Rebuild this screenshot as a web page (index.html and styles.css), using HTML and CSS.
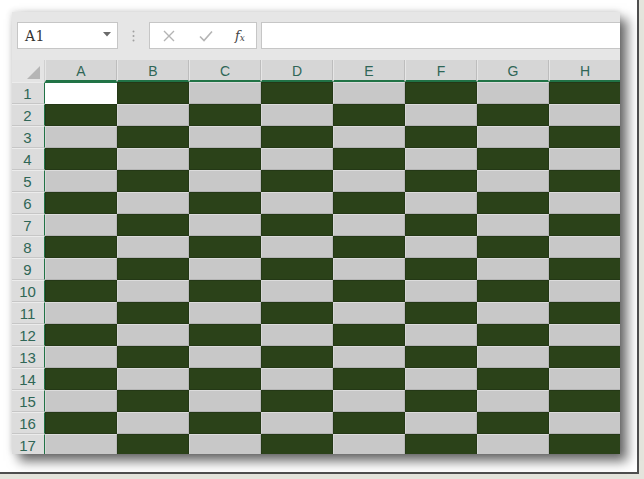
FILE: index.html
```html
<!DOCTYPE html>
<html>
<head>
<meta charset="utf-8">
<link rel="stylesheet" href="styles.css">
</head>
<body>
<div class="frame">
  <div class="window">
    <div class="toolbar">
      <div class="namebox">
        <span class="nb-text">A1</span>
        <svg class="nb-arrow" width="8" height="5" viewBox="0 0 8 5"><path d="M0 0H8L4 4.5Z" fill="#6a6a6a"/></svg>
      </div>
      <div class="sep">
        <svg width="3" height="12" viewBox="0 0 3 12"><circle cx="1.5" cy="1.5" r="1" fill="#a0a0a0"/><circle cx="1.5" cy="6" r="1" fill="#a0a0a0"/><circle cx="1.5" cy="10.5" r="1" fill="#a0a0a0"/></svg>
      </div>
      <div class="fbtns">
        <svg class="ico" width="12" height="12" viewBox="0 0 12 12"><path d="M1 1L11 11M11 1L1 11" stroke="#b4b4b4" stroke-width="1.4" fill="none"/></svg>
        <svg class="ico" width="14" height="12" viewBox="0 0 14 12"><path d="M1 6.5L5 10.5L13 1.5" stroke="#b4b4b4" stroke-width="1.6" fill="none"/></svg>
        <span class="fx">f<sub>x</sub></span>
      </div>
      <div class="finput"></div>
    </div>
    <div class="sheet" id="sheet"></div>
  </div>
</div>
<script src="app.js"></script>
</body>
</html>
```

FILE: app.js
```js
(function () {
  var sheet = document.getElementById('sheet');
  var cols = ['A', 'B', 'C', 'D', 'E', 'F', 'G', 'H'];
  var html = '<div class="corner"><span class="tri"></span></div>';
  cols.forEach(function (c) { html += '<div class="colh">' + c + '</div>'; });
  for (var r = 1; r <= 17; r++) {
    html += '<div class="rowh">' + r + '</div>';
    for (var c = 1; c <= 8; c++) {
      var cls = (r + c) % 2 === 0 ? 'cell light' : 'cell dark';
      if (r === 1 && c === 1) cls = 'cell active';
      html += '<div class="' + cls + '"></div>';
    }
  }
  sheet.innerHTML = html;
})();
```

FILE: styles.css
```css
html, body {
  margin: 0;
  padding: 0;
  background: #e4e4dc;
  width: 644px;
  height: 479px;
  overflow: hidden;
}
.frame {
  width: 639px;
  height: 474px;
  background: #ffffff;
  border-right: 2px solid #4e4e4e;
  border-bottom: 2px solid #4e4e4e;
  padding: 12px 0 0 12px;
  box-sizing: border-box;
}
.window {
  width: 608px;
  height: 442px;
  background: #e6e6e6;
  overflow: hidden;
  box-shadow: 7px 7px 11px rgba(0,0,0,0.6), -1px -1px 6px rgba(0,0,0,0.12);
  font-family: "Liberation Sans", Arial, sans-serif;
}
.toolbar {
  height: 48px;
  display: flex;
  align-items: flex-start;
  padding: 10px 0 0 5px;
  box-sizing: border-box;
}
.namebox {
  width: 101px;
  height: 27px;
  box-sizing: border-box;
  background: #fff;
  border: 1px solid #c6c6c6;
  display: flex;
  align-items: center;
  justify-content: space-between;
  padding: 0 6px 0 7px;
}
.nb-text {
  font-family: "DejaVu Serif", "Liberation Serif", serif;
  font-size: 14px;
  color: #333;
  letter-spacing: 0.5px;
}
.nb-arrow { margin-top: -2px; }
.sep {
  width: 31px;
  height: 27px;
  display: flex;
  align-items: center;
  justify-content: center;
}
.fbtns {
  width: 108px;
  height: 27px;
  box-sizing: border-box;
  background: #fff;
  border: 1px solid #c6c6c6;
  display: flex;
  align-items: center;
  padding: 0 0 0 13px;
}
.fbtns .ico:first-child { margin-right: 24px; }
.fbtns .ico:nth-child(2) { margin-right: 22px; }
.fx {
  font-family: "DejaVu Serif", "Liberation Serif", serif;
  font-style: italic;
  font-size: 13px;
  color: #444;
  line-height: 1;
}
.fx sub {
  font-size: 9px;
  vertical-align: -1px;
}
.finput {
  flex: 1;
  height: 27px;
  margin-left: 4px;
  box-sizing: border-box;
  background: #fff;
  border: 1px solid #c6c6c6;
  border-right: none;
}
.sheet {
  display: grid;
  grid-template-columns: 33px repeat(8, 72px);
  grid-template-rows: 22px repeat(17, 22px);
}
.corner {
  background: #e4e4e4;
  border-right: 1px solid #d0d0d0;
  position: relative;
}
.tri {
  position: absolute;
  right: 4px;
  bottom: 3px;
  width: 0;
  height: 0;
  border-left: 13px solid transparent;
  border-bottom: 13px solid #b5b5b5;
}
.colh {
  background: #d6d6d6;
  border-left: 1px solid #e6e6e6;
  border-right: 1px solid #bdbdbd;
  border-bottom: 2px solid #217346;
  box-sizing: border-box;
  display: flex;
  align-items: center;
  justify-content: center;
  font-size: 14px;
  color: #2f6656;
  padding-top: 1px;
}
.rowh {
  background: #dcdcdc;
  border-bottom: 1px solid #c6c6c6;
  border-top: 1px solid #ececec;
  border-right: 1px solid #217346;
  box-sizing: border-box;
  display: flex;
  align-items: center;
  justify-content: center;
  font-size: 15px;
  color: #2f6656;
  padding-right: 1px;
}
.cell { box-sizing: border-box; }
.light {
  background: #c8c8c8;
  border-top: 1px solid #dcdcdc;
  border-left: 1px solid #d6d6d6;
  border-right: 1px solid #b8b8b8;
  border-bottom: 1px solid #b4b4b4;
}
.dark {
  background: #2b4219;
  border: 1px solid #243816;
}
.active {
  background: #ffffff;
  border-top: 1px solid #217346;
}
```
